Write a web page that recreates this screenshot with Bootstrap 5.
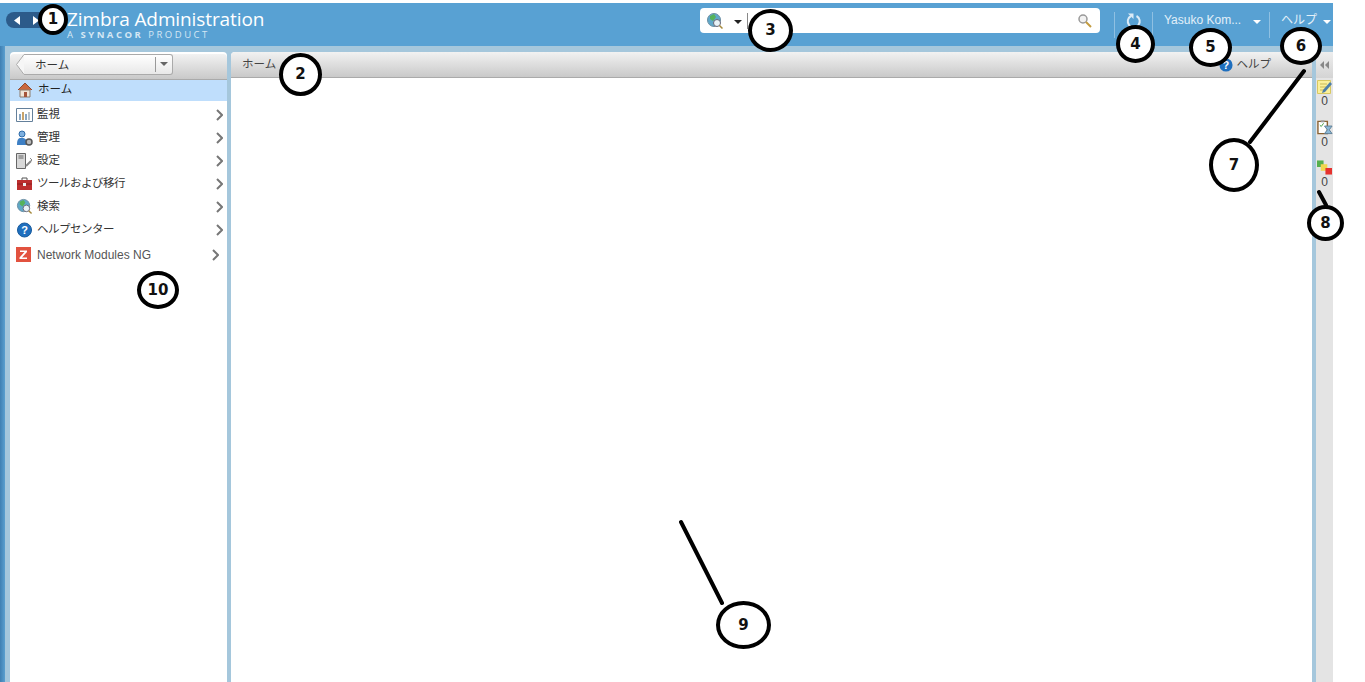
<!DOCTYPE html>
<html lang="ja">
<head>
    <meta charset="UTF-8">
    <meta name="viewport" content="width=device-width, initial-scale=1">
    <link rel="stylesheet" href="https://cdn.jsdelivr.net/npm/bootstrap@5.3.0/dist/css/bootstrap.min.css">
    <style>
        html, body { height: 100%; overflow: hidden; background: #fff; }
        body { font-family: "Liberation Sans", "Noto Sans CJK JP", sans-serif; font-size: 11.5px; color: #333; position: relative; }
        .za-app { width: 1333px; height: 682px; margin-top: 3px; background: #a5c7dc; }
        .za-top { height: 43px; background: #58a1d3; padding: 0 0 0 6px; color: #fff; }
        .za-history { width: 44px; height: 16px; border-radius: 8px; background: #2c5b8a; margin-top: 9px; gap: 13px; padding-left: 8px; }
        .za-brand { margin-left: 17px; padding-top: 6px; width: 633px; }
        .za-brand-name { font-family: "Open Sans", sans-serif; font-size: 19px; line-height: 21px; letter-spacing: -.1px; }
        .za-brand-sub { font-family: "Open Sans", sans-serif; font-size: 9.5px; line-height: 9px; letter-spacing: 2.5px; color: #d5e7f4; }
        .za-search { width: 400px; height: 25px; margin-top: 5px; background: #fff; border-radius: 4px; padding: 0 8px 0 6px; }
        .za-search .za-caret { margin-left: 10px; }
        .za-search-sep { width: 1px; height: 16px; background: #888; margin-left: 5px; }
        .za-refresh { margin-left: 14px; margin-top: 9px; height: 26px; width: 39px; border-left: 1px solid #8fc0e2; border-right: 1px solid #8fc0e2; }
        .za-user { width: 117px; padding: 0 8px 0 11px; margin-top: 9px; height: 26px; border-right: 1px solid #8fc0e2; font-size: 12px; line-height: 16px; color: #e3f0f9; }
        .za-help { width: 63px; padding: 0 2px 0 11px; margin-top: 9px; height: 26px; font-size: 12px; line-height: 16px; color: #e3f0f9; }
        .za-caret { width: 0; height: 0; border-left: 4px solid transparent; border-right: 4px solid transparent; border-top: 4px solid #fff; margin-top: 3px; }
        .za-caret-dark { border-top-color: #222; }
        .za-body { height: 636px; }
        .za-edge { width: 10px; background: linear-gradient(90deg, #3f7fb2, #5a9fcf 5px, #a3c6dc 5px); }
        .za-side { width: 217px; background: #fff; margin-top: 6px; border-radius: 4px 4px 0 0; }
        .za-head { height: 26px; background: linear-gradient(#f2f2f2, #c9c9c9); border-radius: 4px 4px 0 0; border-bottom: 1px solid #aaa; }
        .za-crumb { width: 149px; height: 21px; margin: 2px 0 0 14px; background: linear-gradient(#fff, #e8e8e8); border: 1px solid #aaa; border-left: 0; border-radius: 0 3px 3px 0; position: relative; padding-left: 11px; line-height: 20px; }
        .za-crumb-notch { position: absolute; left: -8px; top: -1px; }
        .za-crumb-drop { position: absolute; right: 0; top: 2px; height: 15px; width: 17px; border-left: 1px solid #999; padding-left: 4px; padding-top: 3px; }
        .za-crumb-drop .za-caret { border-top-color: #666; margin-top: 2px; }
        .za-tree-active { height: 21px; background: #bfdefc; padding: 0 0 2px 7px; gap: 5px; color: #222; margin-bottom: 2px; }
        .za-tree-item { height: 23px; padding: 0 4px 0 6px; color: #333; }
        .za-tree-label { margin-left: 4px; flex: 1; }
        .za-tight { letter-spacing: -.5px; }
        .za-tree-ng { height: 25px; margin-top: 1px; padding-right: 8px; color: #555; font-size: 12px; }
        .za-tree-ng .za-tree-label { margin-left: 6px; }
        .za-gap { width: 4px; }
        .za-main { width: 1081px; background: #fff; margin-top: 6px; border-radius: 4px 4px 0 0; }
        .za-main-head { padding: 0 41px 0 11px; line-height: 24px; color: #444; }
        .za-strip { width: 17px; margin-top: 6px; margin-left: 4px; background: #e4e4e4; border-radius: 4px 0 0 0; color: #444; font-size: 12px; }
        .za-strip-head { height: 26px; flex: none; margin-bottom: 1px; background: linear-gradient(#eee, #d4d4d4); }
        .za-strip-num { line-height: 15px; margin-bottom: 10px; }
        .za-pin { position: absolute; background: #fff; border: 4px solid #000; border-radius: 50%; font: bold 15px/1 "DejaVu Sans", sans-serif; color: #111; }
        .za-lines { position: absolute; left: 0; top: 0; pointer-events: none; }
    </style>
    <title>Zimbra Administration</title>
</head>
<body>

    <div class="za-app d-flex flex-column">
        <header class="za-top d-flex align-items-start">
            <div class="za-history d-flex align-items-center">
                <svg width="6" height="9" viewBox="0 0 6 9"><path d="M6 0v9L0 4.500z" fill="#fff"/></svg>
                <svg width="6" height="9" viewBox="0 0 6 9"><path d="M0 0v9l6-4.500z" fill="#fff"/></svg>
            </div>
            <div class="za-brand">
                <div class="za-brand-name">Zimbra Administration</div>
                <div class="za-brand-sub">A <b>SYNACOR</b> PRODUCT</div>
            </div>
            <div class="za-search d-flex align-items-center">
                <svg width="18" height="18" viewBox="0 0 18 18"><circle cx="8" cy="8" r="6.500" fill="#5fa8c9" stroke="#6c8ea3"/><path d="M4 4l4-2 2 3-3 4-3-2z" fill="#56b25a"/><circle cx="11" cy="11" r="3.500" fill="#e8f2f7" stroke="#667"/><path d="M13.500 13.500l3 3" stroke="#a5893c" stroke-width="1.500"/></svg>
                <span class="za-caret za-caret-dark"></span>
                <span class="za-search-sep"></span>
                <svg class="ms-auto" width="15" height="15" viewBox="0 0 15 15"><circle cx="6" cy="6" r="4" fill="#f2f2f2" stroke="#999" stroke-width="1.500"/><path d="M9 9l5 5" stroke="#c39b3f" stroke-width="2"/></svg>
            </div>
            <div class="za-refresh d-flex justify-content-center">
                <svg class="mt-0" width="16" height="17" viewBox="0 0 16 17"><path d="M10.500 4a6 6 0 1 1-5.500 0" fill="none" stroke="#dcebf6" stroke-width="2"/><path d="M2 1.500h5.500V7z" fill="#dcebf6"/></svg>
            </div>
            <div class="za-user d-flex justify-content-between align-items-start">
                <span>Yasuko Kom...</span><span class="za-caret mt-2"></span>
            </div>
            <div class="za-help d-flex justify-content-between align-items-start">
                <span>ヘルプ</span><span class="za-caret mt-2"></span>
            </div>
        </header>

        <div class="za-body d-flex">
            <div class="za-edge"></div>

            <nav class="za-side">
                <div class="za-head">
                    <div class="za-crumb">
                        <svg class="za-crumb-notch" width="8" height="21" viewBox="0 0 8 21"><path d="M8 .500L.500 10.500 8 20.500z" fill="#f6f6f6"/><path d="M8 .500L.500 10.500 8 20.500" fill="none" stroke="#aaa"/></svg>
                        <span>ホーム</span>
                        <span class="za-crumb-drop"><span class="za-caret d-block"></span></span>
                    </div>
                </div>
                <div class="za-tree-active d-flex align-items-center">
                    <svg width="16" height="16" viewBox="0 0 16 16"><path d="M1 8l7-7 7 7" fill="#c9683f" stroke="#8f4a30"/><path d="M3 8h10v7H3z" fill="#f1e6d8" stroke="#8c7a6a"/><path d="M7 10h3v5H7z" fill="#a5553a"/></svg>
                    <span>ホーム</span>
                </div>
                <div class="za-tree-item d-flex align-items-center">
                    <svg width="17" height="14" viewBox="0 0 17 14"><path d="M.5.5h16v13H.5z" fill="#fff" stroke="#64809b"/><path d="M3 6h2v6H3z" fill="#8aa7c2"/><path d="M6 4h2v8H6z" fill="#c9a46a"/><path d="M9 6h2v6H9z" fill="#8aa7c2"/><path d="M12 4h2v8h-2z" fill="#b7c3cd"/></svg>
                    <span class="za-tree-label">監視</span>
                    <svg width="7" height="12" viewBox="0 0 7 12"><path d="M1 1l5 5-5 5" fill="none" stroke="#777" stroke-width="2"/></svg>
                </div>
                <div class="za-tree-item d-flex align-items-center">
                    <svg width="17" height="16" viewBox="0 0 17 16"><circle cx="6" cy="4" r="3" fill="#7eb0e0" stroke="#2e6ba8"/><path d="M1 15c0-7 2-7 5-7s5 1 5 7z" fill="#3d7fc4"/><circle cx="13" cy="12" r="3" fill="#b9b9b9" stroke="#555" stroke-width="1.500"/></svg>
                    <span class="za-tree-label">管理</span>
                    <svg width="7" height="12" viewBox="0 0 7 12"><path d="M1 1l5 5-5 5" fill="none" stroke="#777" stroke-width="2"/></svg>
                </div>
                <div class="za-tree-item d-flex align-items-center">
                    <svg width="17" height="16" viewBox="0 0 17 16"><path d="M.5.5h9v15h-9z" fill="#d8d8d8" stroke="#666"/><path d="M2.500 3h5M2.500 5h5" stroke="#666"/><path d="M10 13l5-5" stroke="#888" stroke-width="2"/><path d="M14 5l2 2-2 2" fill="none" stroke="#888"/></svg>
                    <span class="za-tree-label">設定</span>
                    <svg width="7" height="12" viewBox="0 0 7 12"><path d="M1 1l5 5-5 5" fill="none" stroke="#777" stroke-width="2"/></svg>
                </div>
                <div class="za-tree-item d-flex align-items-center">
                    <svg width="17" height="14" viewBox="0 0 17 14"><path d="M6 3V1h5v2" fill="none" stroke="#555"/><path d="M1 3h15v10H1z" fill="#bd2e2e"/><path d="M1 7h15" stroke="#8a1f1f"/><path d="M7 6h3v3H7z" fill="#eee"/></svg>
                    <span class="za-tree-label za-tight">ツールおよび移行</span>
                    <svg width="7" height="12" viewBox="0 0 7 12"><path d="M1 1l5 5-5 5" fill="none" stroke="#777" stroke-width="2"/></svg>
                </div>
                <div class="za-tree-item d-flex align-items-center">
                    <svg width="17" height="17" viewBox="0 0 18 18"><circle cx="8" cy="8" r="6.500" fill="#5fa8c9" stroke="#6c8ea3"/><path d="M4 4l4-2 2 3-3 4-3-2z" fill="#56b25a"/><circle cx="11" cy="11" r="3.500" fill="#e8f2f7" stroke="#667"/><path d="M13.500 13.500l3 3" stroke="#a5893c" stroke-width="1.500"/></svg>
                    <span class="za-tree-label">検索</span>
                    <svg width="7" height="12" viewBox="0 0 7 12"><path d="M1 1l5 5-5 5" fill="none" stroke="#777" stroke-width="2"/></svg>
                </div>
                <div class="za-tree-item d-flex align-items-center">
                    <svg width="17" height="16" viewBox="0 0 16 16"><circle cx="8" cy="8" r="7" fill="#1f6fbe" stroke="#175a9c"/><text x="8" y="12" text-anchor="middle" font-family="Liberation Sans" font-weight="bold" font-size="11" fill="#fff">?</text></svg>
                    <span class="za-tree-label za-tight">ヘルプセンター</span>
                    <svg width="7" height="12" viewBox="0 0 7 12"><path d="M1 1l5 5-5 5" fill="none" stroke="#777" stroke-width="2"/></svg>
                </div>
                <div class="za-tree-item za-tree-ng d-flex align-items-center">
                    <svg width="15" height="15" viewBox="0 0 15 15"><path d="M0 0h15v15H0z" fill="#e2523f"/><path d="M4 3.500h7v1.500l-5 5.500h5V12H3.500v-1.500l5-5.500H4z" fill="#fff"/></svg>
                    <span class="za-tree-label">Network Modules NG</span>
                    <svg width="7" height="12" viewBox="0 0 7 12"><path d="M1 1l5 5-5 5" fill="none" stroke="#777" stroke-width="2"/></svg>
                </div>
            </nav>

            <div class="za-gap"></div>

            <main class="za-main">
                <div class="za-head za-main-head d-flex justify-content-between">
                    <span>ホーム</span>
                    <span class="d-flex align-items-center gap-1">
                        <svg width="14" height="14" viewBox="0 0 16 16"><circle cx="8" cy="8" r="7.500" fill="#1f6fbe"/><text x="8" y="12.500" text-anchor="middle" font-family="Liberation Sans" font-weight="bold" font-size="12" fill="#fff">?</text></svg>
                        <span class="lh-1">ヘルプ</span>
                    </span>
                </div>
            </main>

            <aside class="za-strip d-flex flex-column align-items-center">
                <div class="za-strip-head w-100 d-flex justify-content-center align-items-center">
                    <svg width="9" height="8" viewBox="0 0 9 8"><path d="M4 0v8L0 4zM9 0v8L5 4z" fill="#888"/></svg>
                </div>
                <svg width="15" height="15" viewBox="0 0 15 15"><path d="M.5 1.500h13v13H.5z" fill="#fbf09a" stroke="#d8c860"/><path d="M3 5h7M3 8h6M3 11h4" stroke="#c9b95a"/><path d="M6 11l7-8 2 2-7 8-3 1z" fill="#4e7fa8"/></svg>
                <span class="za-strip-num">0</span>
                <svg width="16" height="16" viewBox="0 0 17 16"><path d="M1 2h10v13H1z" fill="#fff" stroke="#8a6232" stroke-width="1.500"/><path d="M4 1h4v2H4z" fill="#999"/><path d="M3 6l1.500 1.500L7 4" fill="none" stroke="#3c9a3c"/><path d="M8 7h8l-3 4 3 4H8l3-4z" fill="#8cb9d8" stroke="#5e7f96"/></svg>
                <span class="za-strip-num">0</span>
                <svg width="15" height="15" viewBox="0 0 16 15"><path d="M0 0h7v7H0z" fill="#56b04e"/><path d="M4 4h7v7H4z" fill="#f1d74d"/><path d="M9 8h7v7H9z" fill="#e5322e"/></svg>
                <span class="za-strip-num">0</span>
            </aside>
        </div>
    </div>

    <svg class="za-lines" width="1365" height="682">
        <path d="M1304 71L1250 142M1319 192L1326 205M681 522L722 603" stroke="#000" stroke-width="4" stroke-linecap="round"/>
    </svg>

    <div class="za-pin d-flex align-items-center justify-content-center" style="left:38px;top:4px;width:30px;height:31px">1</div>
    <div class="za-pin d-flex align-items-center justify-content-center" style="left:279px;top:53px;width:43px;height:43px">2</div>
    <div class="za-pin d-flex align-items-center justify-content-center" style="left:748px;top:9px;width:45px;height:43px">3</div>
    <div class="za-pin d-flex align-items-center justify-content-center" style="left:1116px;top:25px;width:39px;height:38px">4</div>
    <div class="za-pin d-flex align-items-center justify-content-center" style="left:1189px;top:28px;width:43px;height:39px">5</div>
    <div class="za-pin d-flex align-items-center justify-content-center" style="left:1280px;top:27px;width:42px;height:38px">6</div>
    <div class="za-pin d-flex align-items-center justify-content-center" style="left:1209px;top:138px;width:50px;height:54px">7</div>
    <div class="za-pin d-flex align-items-center justify-content-center" style="left:1307px;top:205px;width:37px;height:36px">8</div>
    <div class="za-pin d-flex align-items-center justify-content-center" style="left:716px;top:601px;width:55px;height:48px">9</div>
    <div class="za-pin d-flex align-items-center justify-content-center" style="left:137px;top:271px;width:42px;height:38px">10</div>

</body>
</html>
